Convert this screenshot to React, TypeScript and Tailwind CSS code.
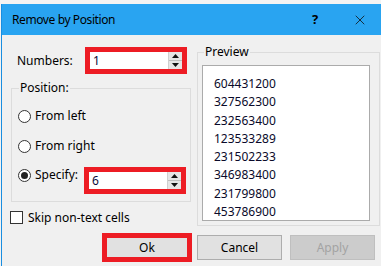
import { X } from "lucide-react";

const font = "font-['Segoe_UI','Noto_Sans',sans-serif]";

function Spinner() {
    return (
        <div className="w-[14px] h-full flex flex-col bg-[#e5e5e5] border-l border-[#cfcfcf]">
            <div className="flex-1 flex items-center justify-center border-b border-[#bdbdbd]">
                <svg width="7" height="4" viewBox="0 0 7 4"><path d="M3.5 0 L7 4 L0 4 Z" fill="#111" /></svg>
            </div>
            <div className="flex-1 flex items-center justify-center">
                <svg width="7" height="4" viewBox="0 0 7 4"><path d="M0 0 L7 0 L3.5 4 Z" fill="#111" /></svg>
            </div>
        </div>
    )
}

function RedSpin({ value }: { value: string }) {
    return (
        <div className="w-[102px] h-[27px] border-[5px] border-[#ed1c24] bg-white flex">
            <div className="flex-1 pl-[3px] leading-[17px] text-[#0a0a3a]">{value}</div>
            <Spinner />
        </div>
    )
}

function Radio({ label, checked }: { label: string, checked?: boolean }) {
    return (
        <div className="w-[66px] h-[16px] flex items-center gap-[4px]">
            <div className="w-[13px] h-[13px] rounded-full border border-[#333] bg-white flex items-center justify-center shrink-0">
                {checked && <div className="w-[7px] h-[7px] rounded-full bg-[#222]" />}
            </div>
            <span className="whitespace-nowrap">{label}</span>
        </div>
    )
}

const preview = ["604431200", "327562300", "232563400", "123533289", "231502233", "346983400", "231799800", "453786900"]

export default function App() {
    return (
        <div className={`w-[381px] h-[266px] bg-[#f3f3f3] overflow-hidden text-[12px] text-black ${font}`}>
            <div className="mt-[4px] ml-[1px] h-[262px] border-l border-[#1a8ee0] bg-[#f0f0f0] flex flex-col">
                {/* title bar */}
                <div className="h-[31px] bg-[#29a4f1] flex items-center pl-[10px] shrink-0">
                    <span className="flex-1 tracking-[-0.4px]">Remove by Position</span>
                    <span className="font-bold text-[13px] w-[12px] text-center mr-[31px]">?</span>
                    <X className="w-[16px] h-[16px] mr-[13px]" strokeWidth={1.2} color="#111" />
                </div>

                <div className="flex items-start">
                    {/* left column */}
                    <div className="w-[190px] flex flex-col">
                        <div className="mt-[12px] flex items-center">
                            <span className="ml-[15px] w-[68px]">Numbers:</span>
                            <RedSpin value="1" />
                        </div>

                        <fieldset className="mt-[6px] ml-[9px] w-[180px] border border-[#dcdcdc] pb-[7px]">
                            <legend className="ml-[7px] px-[1px] leading-[16px]">Position:</legend>
                            <div className="mt-[12px] pl-[6px]"><Radio label="From left" /></div>
                            <div className="mt-[14px] pl-[6px]"><Radio label="From right" /></div>
                            <div className="mt-[13px] pl-[6px] flex items-start">
                                <Radio label="Specify:" checked />
                                <RedSpin value="6" />
                            </div>
                        </fieldset>

                        <div className="mt-[9px] ml-[8px] h-[13px] flex items-center gap-[5px]">
                            <div className="w-[13px] h-[13px] border border-[#333] bg-white" />
                            <span className="whitespace-nowrap">Skip non-text cells</span>
                        </div>
                    </div>

                    {/* preview */}
                    <fieldset className="mt-[9px] ml-[5px] w-[183px] border border-[#dcdcdc] pb-[4px]">
                        <legend className="ml-[6px] px-[1px] leading-[16px]">Preview</legend>
                        <div className="mt-[5px] ml-[4px] w-[168px] h-[156px] border border-[#ababab] bg-white pl-[11px] pt-[9px] leading-[18.25px] text-[#0a0a2a]">
                            {preview.map((n, i) => (
                                <div key={i}>{n}</div>
                            ))}
                        </div>
                    </fieldset>
                </div>

                {/* buttons */}
                <div className="mt-[7px] h-[29px] flex items-center justify-end pr-[6px]">
                    <div className="w-[90px] h-[29px] border-[5px] border-[#ed1c24] bg-[#e1e1e1] flex items-center justify-center">Ok</div>
                    <div className="ml-[5px] w-[85px] h-[25px] border border-[#adadad] bg-[#e1e1e1] flex items-center justify-center">Cancel</div>
                    <div className="ml-[8px] w-[85px] h-[25px] border border-[#bfbfbf] bg-[#cccccc] text-[#a3a3a3] flex items-center justify-center">Apply</div>
                </div>
            </div>
        </div>
    )
}
